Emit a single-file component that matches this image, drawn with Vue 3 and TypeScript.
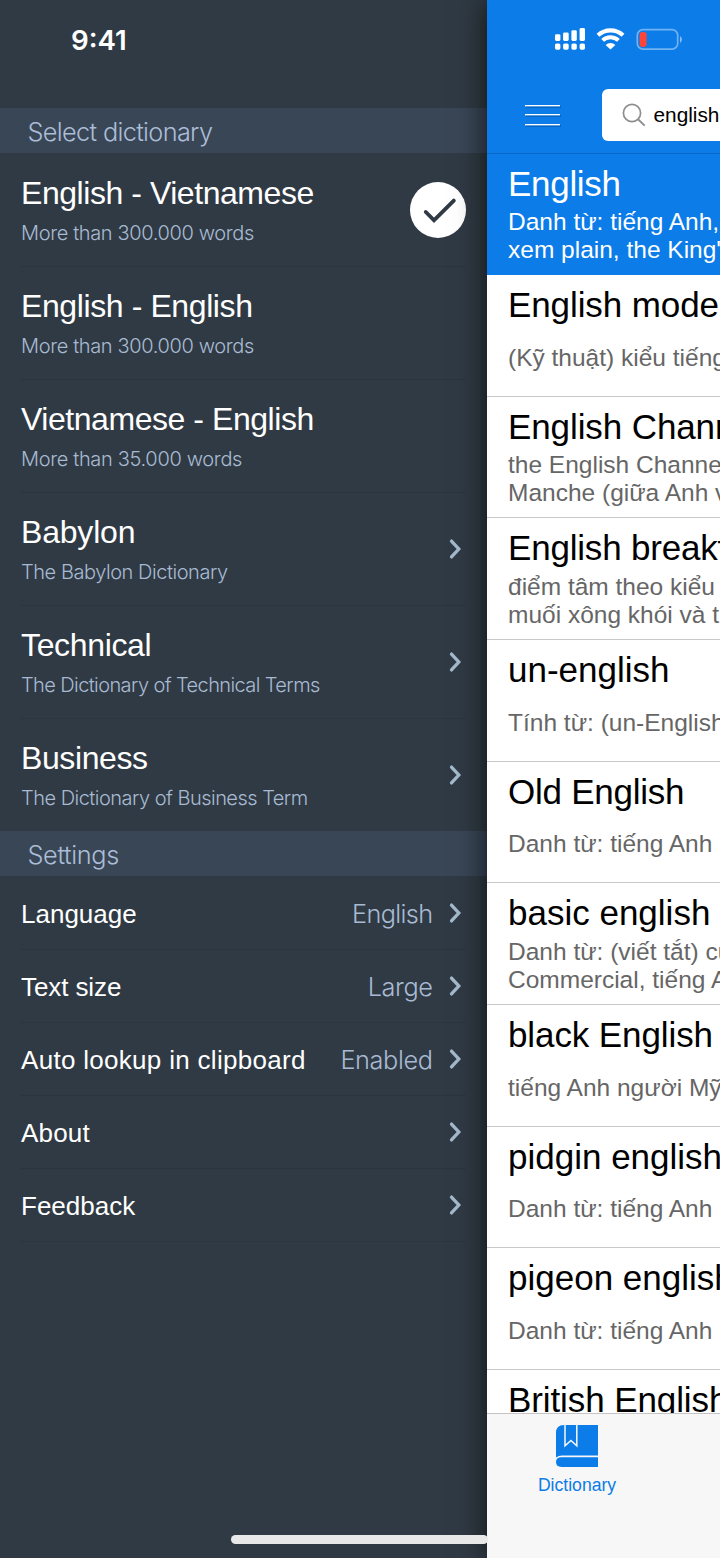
<script setup lang="ts">
interface Dictionary {
  title: string
  note: string
  selected?: boolean
  more?: boolean
  titleTracking?: number
  noteTracking: number
}
interface Setting {
  label: string
  value?: string
  labelTracking?: number
  valueTracking?: number
}
interface Result {
  word: string
  lines: string[]
  active?: boolean
  tracking?: number
}

const dictionaries: Dictionary[] = [
  { title: 'English - Vietnamese', note: 'More than 300.000 words', selected: true, titleTracking: -0.45, noteTracking: -0.36 },
  { title: 'English - English', note: 'More than 300.000 words', titleTracking: -0.4, noteTracking: -0.36 },
  { title: 'Vietnamese - English', note: 'More than 35.000 words', titleTracking: -0.45, noteTracking: -0.33 },
  { title: 'Babylon', note: 'The Babylon Dictionary', more: true, titleTracking: -0.2, noteTracking: -0.45 },
  { title: 'Technical', note: 'The Dictionary of Technical Terms', more: true, titleTracking: -0.35, noteTracking: -0.6 },
  { title: 'Business', note: 'The Dictionary of Business Term', more: true, titleTracking: -0.4, noteTracking: -0.52 },
]

const settings: Setting[] = [
  { label: 'Language', value: 'English', valueTracking: -0.65 },
  { label: 'Text size', value: 'Large', labelTracking: -0.1, valueTracking: -0.4 },
  { label: 'Auto lookup in clipboard', value: 'Enabled', labelTracking: 0.3, valueTracking: -0.4 },
  { label: 'About', labelTracking: 0.2 },
  { label: 'Feedback' },
]

const results: Result[] = [
  { word: 'English', lines: ['Danh từ: tiếng Anh,', "xem plain, the King's"], active: true, tracking: -0.3 },
  { word: 'English model', lines: ['(Kỹ thuật) kiểu tiếng'], tracking: -0.1 },
  { word: 'English Channel', lines: ['the English Channel', 'Manche (giữa Anh và'], tracking: -0.1 },
  { word: 'English breakfast', lines: ['điểm tâm theo kiểu', 'muối xông khói và trứng'], tracking: -0.2 },
  { word: 'un-english', lines: ['Tính từ: (un-English)'] },
  { word: 'Old English', lines: ['Danh từ: tiếng Anh'], tracking: -0.25 },
  { word: 'basic english', lines: ['Danh từ: (viết tắt) của', 'Commercial, tiếng Anh'] },
  { word: 'black English', lines: ['tiếng Anh người Mỹ'], tracking: -0.1 },
  { word: 'pidgin english', lines: ['Danh từ: tiếng Anh'] },
  { word: 'pigeon english', lines: ['Danh từ: tiếng Anh'] },
  { word: 'British English', lines: ['tiếng Anh'], tracking: -0.1 },
]

const spacing = (v?: number) => (v ? { letterSpacing: `${v}px` } : undefined)
</script>

<template>
  <div class="screen">
    <aside class="menu">
      <div class="clock">9:41</div>
      <h2 class="section first">Select dictionary</h2>
      <ul class="list">
        <li v-for="d in dictionaries" :key="d.title" class="dict">
          <div class="dict-text">
            <div class="dict-title" :style="spacing(d.titleTracking)">{{ d.title }}</div>
            <div class="dict-note" :style="spacing(d.noteTracking)">{{ d.note }}</div>
          </div>
          <svg v-if="d.selected" class="check" viewBox="0 0 56 56">
            <circle cx="28" cy="28" r="28" fill="#fff" />
            <path d="M15.8 30 24 38.3 43.8 18.6" fill="none" stroke="#2f3a44" stroke-width="3.9" stroke-linecap="round" />
          </svg>
          <svg v-if="d.more" class="chevron" viewBox="0 0 14 22">
            <path d="M2.5 3.1 9.8 11 2.5 18.9" fill="none" stroke="#a4bacc" stroke-width="3.3" stroke-linecap="round" />
          </svg>
        </li>
      </ul>
      <h2 class="section second">Settings</h2>
      <ul class="list">
        <li v-for="s in settings" :key="s.label" class="setting">
          <span class="label" :style="spacing(s.labelTracking)">{{ s.label }}</span>
          <span class="value" :style="spacing(s.valueTracking)">{{ s.value }}</span>
          <svg class="chevron" viewBox="0 0 14 22">
            <path d="M2.5 3.1 9.8 11 2.5 18.9" fill="none" stroke="#a4bacc" stroke-width="3.3" stroke-linecap="round" />
          </svg>
        </li>
      </ul>
    </aside>

    <main class="content">
      <header class="top">
        <svg class="status" viewBox="0 0 130 24">
          <g fill="#fff">
            <rect x="0" y="7.2" width="5.4" height="6.8" rx="1.4" />
            <rect x="8.1" y="5.4" width="5.6" height="8.6" rx="1.4" />
            <rect x="16.4" y="3.2" width="5.4" height="10.8" rx="1.4" />
            <rect x="24.6" y="1" width="5.4" height="13" rx="1.4" />
            <rect x="0" y="16.5" width="5.4" height="6.2" rx="1.6" />
            <rect x="8.1" y="16.5" width="5.6" height="6.2" rx="1.6" />
            <rect x="16.4" y="16.5" width="5.4" height="6.2" rx="1.6" />
            <rect x="24.6" y="16.5" width="5.4" height="6.2" rx="1.6" />
          </g>
          <g fill="none" stroke="#fff">
            <path d="M43 8.3A18.2 18.2 0 0 1 68 8.3" stroke-width="4.2" />
            <path d="M47.6 13.4A11.5 11.5 0 0 1 63.4 13.4" stroke-width="4" />
          </g>
          <path d="M55.5 22.5 50.6 17.9A7 7 0 0 1 60.4 17.9Z" fill="#fff" />
          <rect x="82.3" y="2.7" width="40.4" height="19.4" rx="5.6" fill="none" stroke="#fff" stroke-opacity=".42" stroke-width="1.7" />
          <path d="M125 9.2C127.5 10 127.5 15 125 15.8Z" fill="#fff" fill-opacity=".5" />
          <rect x="84.6" y="4.9" width="7" height="15" rx="2.8" fill="#ff443a" />
        </svg>
        <div class="bar">
          <div class="burger"><i></i><i></i><i></i></div>
          <div class="search">
            <svg viewBox="0 0 24 24">
              <circle cx="10" cy="10" r="8.6" fill="none" stroke="#8e8e90" stroke-width="1.7" />
              <path d="M16 16.2 22.7 22.6" stroke="#8e8e90" stroke-width="1.9" />
            </svg>
            <span>english</span>
          </div>
        </div>
      </header>
      <div class="results">
        <div v-for="r in results" :key="r.word" class="result" :class="{ active: r.active }">
          <div class="word" :style="spacing(r.tracking)">{{ r.word }}</div>
          <div class="meaning">
            <div v-for="l in r.lines" :key="l">{{ l }}</div>
          </div>
        </div>
      </div>
      <nav class="tabs">
        <div class="tab">
          <svg viewBox="0 0 42 42">
            <path d="M8 0H42V30.5H6Q2.5 30.5 0 32.5V8Q0 0 8 0Z" fill="#0b7ce8" />
            <path d="M5.5 32.3H42V42H5.5Q0 42 0 37.1T5.5 32.3Z" fill="#0b7ce8" />
            <path d="M9 0V20.8L14.9 15.4 20.8 20.8V0" fill="none" stroke="#f7f7f7" stroke-width="1.5" />
          </svg>
          <span>Dictionary</span>
        </div>
      </nav>
    </main>
    <div class="home"></div>
  </div>
</template>

<style>
html, body { margin: 0; background: #303a44; }
</style>

<style scoped>
.screen {
  position: relative;
  display: flex;
  width: 720px;
  height: 1558px;
  overflow: hidden;
  background: #303a44;
  font-family: "Liberation Sans", Arial, sans-serif;
}
.menu { width: 487px; flex: none; color: #fff; }
.clock {
  box-sizing: border-box;
  height: 108px;
  padding: 20px 0 0 71px;
  font: 600 27.7px/40px Inter, sans-serif;
}
.section {
  box-sizing: border-box;
  margin: 0;
  height: 45px;
  padding: 1px 0 0 27.5px;
  background: #394656;
  color: #abbdd6;
  font: 300 25.3px/46px Inter, sans-serif;
}
.first { letter-spacing: -0.66px; }
.second { letter-spacing: -0.36px; }
.list { margin: 0; padding: 0 21px; list-style: none; }
.dict, .setting {
  box-sizing: border-box;
  display: flex;
  align-items: center;
  box-shadow: 0 1px 0 #2c353e;
}
.dict { height: 113px; justify-content: space-between; }
.dict:last-child { box-shadow: none; }
.dict-title { font-size: 32px; line-height: 36px; white-space: nowrap; }
.dict-note {
  margin-top: 8px;
  color: #a8bad2;
  font: 300 20px/28px Inter, sans-serif;
  white-space: nowrap;
}
.dict-text { padding-top: 3px; }
.check { width: 56px; height: 56px; }
.chevron { flex: none; width: 14px; height: 22px; margin-right: 3px; }
.setting { height: 73px; }
.label { font-size: 26px; line-height: 32px; padding-top: 3px; white-space: nowrap; }
.value {
  margin: 0 16.5px 0 auto;
  padding-top: 3px;
  color: #a8bad2;
  font: 300 25.3px/32px Inter, sans-serif;
}
.content {
  display: flex;
  flex-direction: column;
  width: 233px;
  height: 1558px;
  background: #fff;
  box-shadow: 0 0 28px rgba(0, 0, 0, 0.72);
}
.top {
  flex: none;
  box-sizing: border-box;
  height: 153.5px;
  padding-top: 27px;
  background: #0b7ce8;
  border-bottom: 1px solid #0a68c4;
}
.status { display: block; width: 130px; height: 24px; margin-left: 68px; }
.bar { display: flex; align-items: flex-start; margin-top: 37.5px; overflow: hidden; }
.burger { flex: none; margin: 16px 41.5px 0 38px; }
.burger i {
  display: block;
  width: 35px;
  height: 1px;
  margin-bottom: 8.5px;
  background: #fff;
  box-shadow: 0 0.5px 0 #b9d6f4, 1px 1.5px 0.5px rgba(0, 50, 110, 0.6);
}
.search {
  flex: none;
  box-sizing: border-box;
  display: flex;
  align-items: center;
  width: 300px;
  height: 52.5px;
  padding-left: 20px;
  border-radius: 6px;
  background: #fff;
  font-size: 20.8px;
  line-height: 24px;
}
.search svg { width: 24px; height: 24px; margin-right: 8px; }
.results { flex: 1; overflow: hidden; }
.result {
  box-sizing: border-box;
  height: 121.67px;
  padding-left: 21px;
  border-bottom: 1px solid #c8c7cc;
  overflow: hidden;
  white-space: nowrap;
}
.word { padding-top: 9px; font-size: 35px; line-height: 42px; color: #000; }
.meaning {
  display: flex;
  flex-direction: column;
  justify-content: center;
  height: 56px;
  margin-top: 3.5px;
  color: #666;
  font-size: 24.5px;
  line-height: 28px;
}
.active { background: #0b7ce8; border-color: #0b7ce8; }
.active .word, .active .meaning { color: #fff; }
.tabs {
  flex: none;
  box-sizing: border-box;
  height: 145px;
  background: #f7f7f7;
  border-top: 1px solid #c4c4c4;
}
.tab {
  display: flex;
  flex-direction: column;
  align-items: center;
  width: 180px;
  padding-top: 11.4px;
  color: #0b7ce8;
  font-size: 17.6px;
  line-height: 22px;
}
.tab svg { width: 42px; height: 42px; margin-bottom: 7px; }
.home {
  position: absolute;
  left: 231px;
  top: 1535px;
  width: 257px;
  height: 9px;
  border-radius: 5px;
  background: #e8e8e8;
}
</style>
